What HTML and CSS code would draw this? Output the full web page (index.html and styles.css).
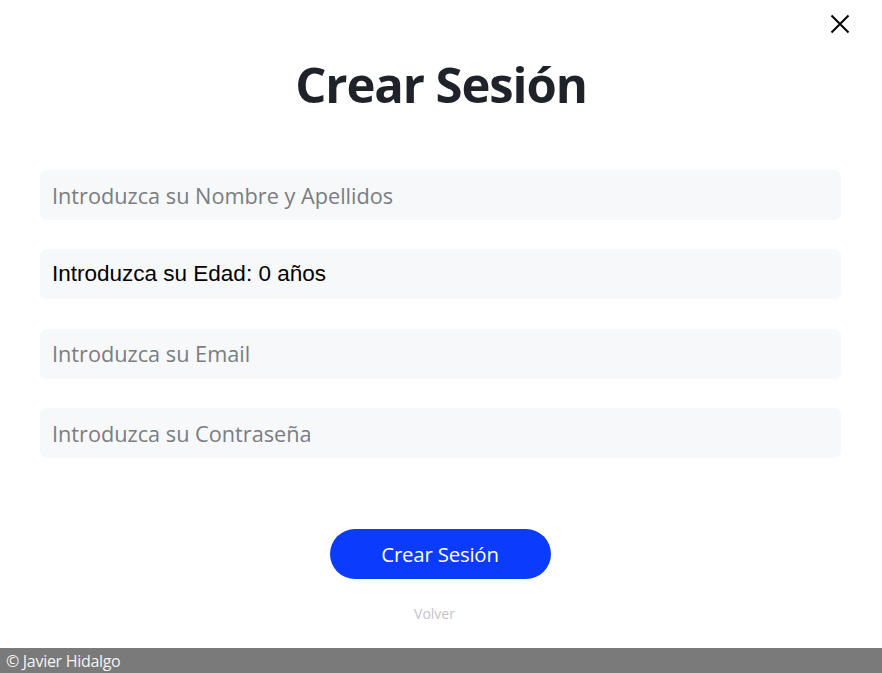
FILE: index.html
```html
<!DOCTYPE html>
<html lang="es">
<head>
<meta charset="utf-8">
<title>Crear Sesión</title>
<link rel="stylesheet" href="styles.css">
</head>
<body>
<div class="page">
  <main class="modal">
    <button class="close" aria-label="Cerrar">
      <svg width="20" height="20" viewBox="0 0 20 20"><path d="M1.5 1.5 L18.5 18.5 M18.5 1.5 L1.5 18.5" stroke="#000" stroke-width="2" fill="none"/></svg>
    </button>
    <h1 class="title">Crear Sesión</h1>
    <form class="form">
      <input class="field" type="text" placeholder="Introduzca su Nombre y Apellidos" autofocus>
      <div class="field age">Introduzca su Edad: 0 años</div>
      <input class="field" type="email" placeholder="Introduzca su Email">
      <input class="field" type="password" placeholder="Introduzca su Contraseña">
      <div class="actions">
        <button type="button" class="submit">Crear Sesión</button>
        <a class="back" href="#">Volver</a>
      </div>
    </form>
  </main>
  <footer class="footer">© Javier Hidalgo</footer>
</div>
</body>
</html>
```
FILE: styles.css
```css
* { box-sizing: border-box; }
html, body { margin: 0; padding: 0; background: #fff; }
body { font-family: "Open Sans", "Noto Sans", sans-serif; }
.page { display: flex; flex-direction: column; height: 673px; }
.modal { position: relative; flex: 1; display: flex; flex-direction: column; }
.close {
  position: absolute; top: 14px; right: 32px;
  width: 20px; height: 20px; padding: 0; border: 0; background: transparent;
  display: flex;
}
.title {
  margin: 52px 0 0; text-align: center;
  font-size: 49px; font-weight: 700; color: #1f2329; line-height: 64px;
  letter-spacing: -1.1px;
}
.form { display: flex; flex-direction: column; gap: 29.4px; padding: 0 41px 0 40px; margin-top: 54px; }
.field {
  display: block; width: 100%; height: 50px; border: 0; border-radius: 7px;
  background: #f7f8fa; padding: 0 12px; outline: none; caret-color: #000;
  font-family: "Open Sans", "Noto Sans", sans-serif; font-size: 21.7px; color: #222;
}
.field::placeholder { color: #7b7d80; }
.age {
  display: flex; align-items: center;
  font-family: "Liberation Sans", Arial, sans-serif; font-size: 22.5px; color: #000;
}
.actions { display: flex; flex-direction: column; align-items: center; margin-top: 41px; }
.submit {
  width: 221px; height: 50px; border: 0; border-radius: 25px;
  background: #0b3bfd; color: #fff; margin-left: -1px;
  font-family: "Open Sans", "Noto Sans", sans-serif; font-size: 20.4px; letter-spacing: -0.2px;
}
.back {
  margin-top: 25px; color: #c2c3ca; text-decoration: none; font-size: 14px; margin-left: -12px;
}
.footer {
  height: 25px; background: #7a7a7a; color: #f4f4f4; font-size: 16px;
  padding: 2px 6px 0; line-height: 22px; letter-spacing: -0.3px;
}
```
